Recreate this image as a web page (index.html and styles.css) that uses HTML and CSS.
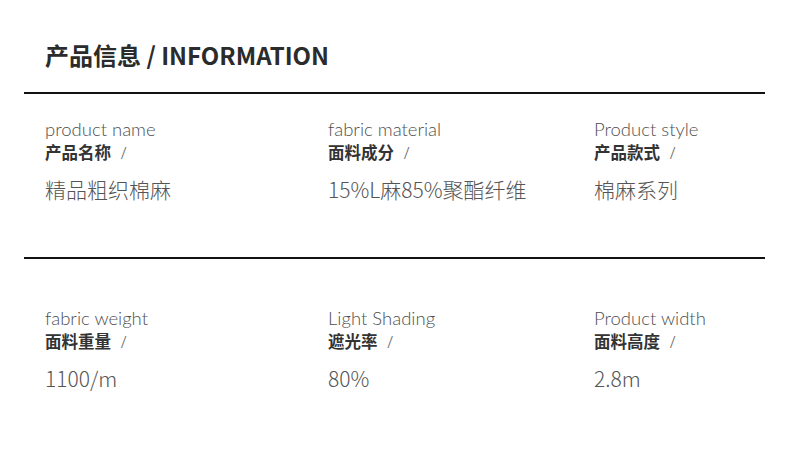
FILE: index.html
```html
<!DOCTYPE html>
<html lang="zh">
<head>
<meta charset="utf-8">
<link rel="stylesheet" href="styles.css">
</head>
<body>
<div class="page">
  <h1 class="title">产品信息 / INFORMATION</h1>
  <div class="rule"></div>
  <div class="row row-first">
    <div class="cell c1">
      <div class="en">product name</div>
      <div class="zh">产品名称 <span class="sl">/</span></div>
      <div class="val">精品粗织棉麻</div>
    </div>
    <div class="cell c2">
      <div class="en">fabric material</div>
      <div class="zh">面料成分 <span class="sl">/</span></div>
      <div class="val">15%L麻85%聚酯纤维</div>
    </div>
    <div class="cell c3">
      <div class="en">Product style</div>
      <div class="zh">产品款式 <span class="sl">/</span></div>
      <div class="val">棉麻系列</div>
    </div>
  </div>
  <div class="rule"></div>
  <div class="row row-second">
    <div class="cell c1">
      <div class="en">fabric weight</div>
      <div class="zh">面料重量 <span class="sl">/</span></div>
      <div class="val">1100/m</div>
    </div>
    <div class="cell c2">
      <div class="en">Light Shading</div>
      <div class="zh">遮光率 <span class="sl">/</span></div>
      <div class="val">80%</div>
    </div>
    <div class="cell c3">
      <div class="en">Product width</div>
      <div class="zh">面料高度 <span class="sl">/</span></div>
      <div class="val">2.8m</div>
    </div>
  </div>
</div>
</body>
</html>
```

FILE: styles.css
```css
* { box-sizing: border-box; }
html, body { margin: 0; padding: 0; background: #fff; }
body {
  width: 790px;
  height: 465px;
  overflow: hidden;
  font-family: "Noto Sans", "Noto Sans CJK SC", sans-serif;
}
.page {
  padding: 37px 25px 0 24px;
}
.title {
  margin: 0 0 0 21px;
  font-family: "Noto Sans CJK SC", sans-serif;
  font-weight: 700;
  font-size: 24px;
  line-height: 36px;
  color: #2b2b2b;
}
.rule {
  height: 2px;
  background: #111;
  margin-top: 19px;
}
.row {
  display: grid;
  grid-template-columns: 283px 266px 1fr;
  padding-left: 21px;
}
.row-first { padding-top: 24px; height: 163px; }
.row-first + .rule { margin-top: 0; }
.row-second { padding-top: 48px; }
.en {
  font-family: "Lato", "Noto Sans", sans-serif;
  font-weight: 300;
  font-size: 18.5px;
  line-height: 23px;
  color: #4f4f4f;
}
.zh {
  font-family: "Noto Sans CJK SC", sans-serif;
  font-weight: 700;
  font-size: 16.5px;
  line-height: 23px;
  color: #333;
}
.zh .sl {
  font-family: "Noto Sans", sans-serif;
  font-weight: 300;
  color: #666;
  margin-left: 6px;
}
.val {
  margin-top: 12px;
  font-family: "Noto Sans CJK SC", sans-serif;
  font-weight: 300;
  font-size: 21px;
  line-height: 27px;
  color: #555;
}
```
